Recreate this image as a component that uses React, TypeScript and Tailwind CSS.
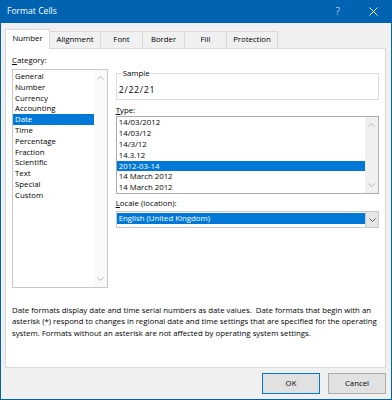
import { ReactNode } from 'react'

const categories = [
  'General',
  'Number',
  'Currency',
  'Accounting',
  'Date',
  'Time',
  'Percentage',
  'Fraction',
  'Scientific',
  'Text',
  'Special',
  'Custom',
]

const types = [
  '14/03/2012',
  '14/03/12',
  '14/3/12',
  '14.3.12',
  '2012-03-14',
  '14 March 2012',
  '14 March 2012',
]

const tabs = ['Number', 'Alignment', 'Font', 'Border', 'Fill', 'Protection']
const tabWidths = ['w-[45px]', 'w-[51px]', 'w-[42px]', 'w-[42px]', 'w-[42px]', 'w-[51px]']

function Chevron({ up, dark }: { up?: boolean; dark?: boolean }) {
  return (
    <svg width="7" height="4" viewBox="0 0 7 4" className="block">
      <polyline
        points={up ? '0.5,3.5 3.5,0.5 6.5,3.5' : '0.5,0.5 3.5,3.5 6.5,0.5'}
        fill="none"
        stroke={dark ? '#606060' : '#b4b4b4'}
        strokeWidth="1"
      />
    </svg>
  )
}

function Scrollbar({ bg }: { bg: string }) {
  return (
    <div className={`w-[13px] flex flex-col items-center justify-between py-[6px] ${bg}`}>
      <Chevron up />
      <Chevron />
    </div>
  )
}

function Label({ children }: { children: ReactNode }) {
  return <div className="h-[11px] leading-[11px]">{children}</div>
}

export default function App() {
  return (
    <div className="w-[392px] h-[400px] bg-[#0063b1] px-px pb-px flex flex-col font-['Open_Sans',sans-serif] text-[7.8px] text-black">
      {/* title bar */}
      <div className="h-[23px] flex items-center pl-[6px] text-white">
        <span className="flex-1 text-[8.6px]">Format Cells</span>
        <span className="text-[10px] mr-[29px] font-light">?</span>
        <svg width="9" height="9" viewBox="0 0 9 9" className="mr-[13px]">
          <path d="M0.5 0.5 L8.5 8.5 M8.5 0.5 L0.5 8.5" stroke="white" strokeWidth="1" />
        </svg>
      </div>

      <div className="flex-1 bg-[#f0f0f0] pl-[4px] pr-[5px] pt-[6px] flex flex-col">
        {/* tabs */}
        <div className="h-[20px] -mb-px flex items-end relative z-10">
          {tabs.map((t, i) =>
            i === 0 ? (
              <div
                key={t}
                className={`${tabWidths[i]} h-[20px] bg-white border-l border-t border-r border-[#d9d9d9] flex items-center justify-center pb-[2px]`}
              >
                {t}
              </div>
            ) : (
              <div
                key={t}
                className={`${tabWidths[i]} h-[18px] bg-[#f0f0f0] border-t border-r border-b border-[#d9d9d9] flex items-center justify-center`}
              >
                {t}
              </div>
            )
          )}
        </div>

        {/* panel */}
        <div className="h-[320px] bg-white border border-[#d9d9d9] px-[6px] pt-[6px] flex flex-col">
          <div className="flex">
            {/* category */}
            <div className="w-[96px]">
              <Label>
                <u>C</u>ategory:
              </Label>
              <div className="mt-[3px] h-[219px] border border-[#c8c8c8] flex">
                <div className="flex-1 pt-px">
                  {categories.map((c) => (
                    <div
                      key={c}
                      className={`h-[10.8px] leading-[10.8px] pl-[2px] ${c === 'Date' ? 'bg-[#0078d7] text-white' : ''}`}
                    >
                      {c}
                    </div>
                  ))}
                </div>
                <Scrollbar bg="bg-[#fafafa]" />
              </div>
            </div>

            {/* right side */}
            <div className="ml-[8px] w-[264px] pt-[13px]">
              <fieldset className="border border-[#dcdcdc] pl-[2px] pt-[5px] pb-[3px]">
                <legend className="ml-[3px] px-px h-[11px] leading-[11px]">Sample</legend>
                <div className="h-[12px] leading-[12px] text-[8.8px] tracking-[0.7px]">2/22/21</div>
              </fieldset>

              <div className="mt-[5px]">
                <Label>
                  <u>T</u>ype:
                </Label>
              </div>
              <div className="h-[78px] border border-[#adadad] flex">
                <div className="flex-1">
                  {types.map((t, i) => (
                    <div
                      key={i}
                      className={`h-[10.9px] leading-[10.9px] pl-[2px] ${i === 4 ? 'bg-[#0078d7] text-white' : ''}`}
                    >
                      {t}
                    </div>
                  ))}
                </div>
                <Scrollbar bg="bg-[#f0f0f0]" />
              </div>

              <div className="mt-[4px]">
                <Label>
                  <u>L</u>ocale (location):
                </Label>
              </div>
              <div className="mt-[2px] h-[17px] border border-[#c8c8c8] flex">
                <div className="flex-1 pt-px">
                  <div className="h-[11px] leading-[11px] pl-[2px] bg-[#0078d7] text-white">
                    English (United Kingdom)
                  </div>
                </div>
                <div className="w-[13px] bg-[#e5e5e5] border-l border-[#c8c8c8] flex items-center justify-center">
                  <Chevron dark />
                </div>
              </div>
            </div>
          </div>

          <p className="mt-[17px] leading-[11.4px] whitespace-nowrap">
            Date formats display date and time serial numbers as date values.&nbsp; Date formats that begin with an
            <br />
            asterisk (*) respond to changes in regional date and time settings that are specified for the operating
            <br />
            system. Formats without an asterisk are not affected by operating system settings.
          </p>
        </div>

        {/* buttons */}
        <div className="mt-[5px] flex justify-end gap-[8px]">
          <button className="w-[58px] h-[21px] bg-[#e1e1e1] border border-[#0078d7] leading-none">OK</button>
          <button className="w-[58px] h-[21px] bg-[#e1e1e1] border border-[#adadad] leading-none">Cancel</button>
        </div>
      </div>
    </div>
  )
}
